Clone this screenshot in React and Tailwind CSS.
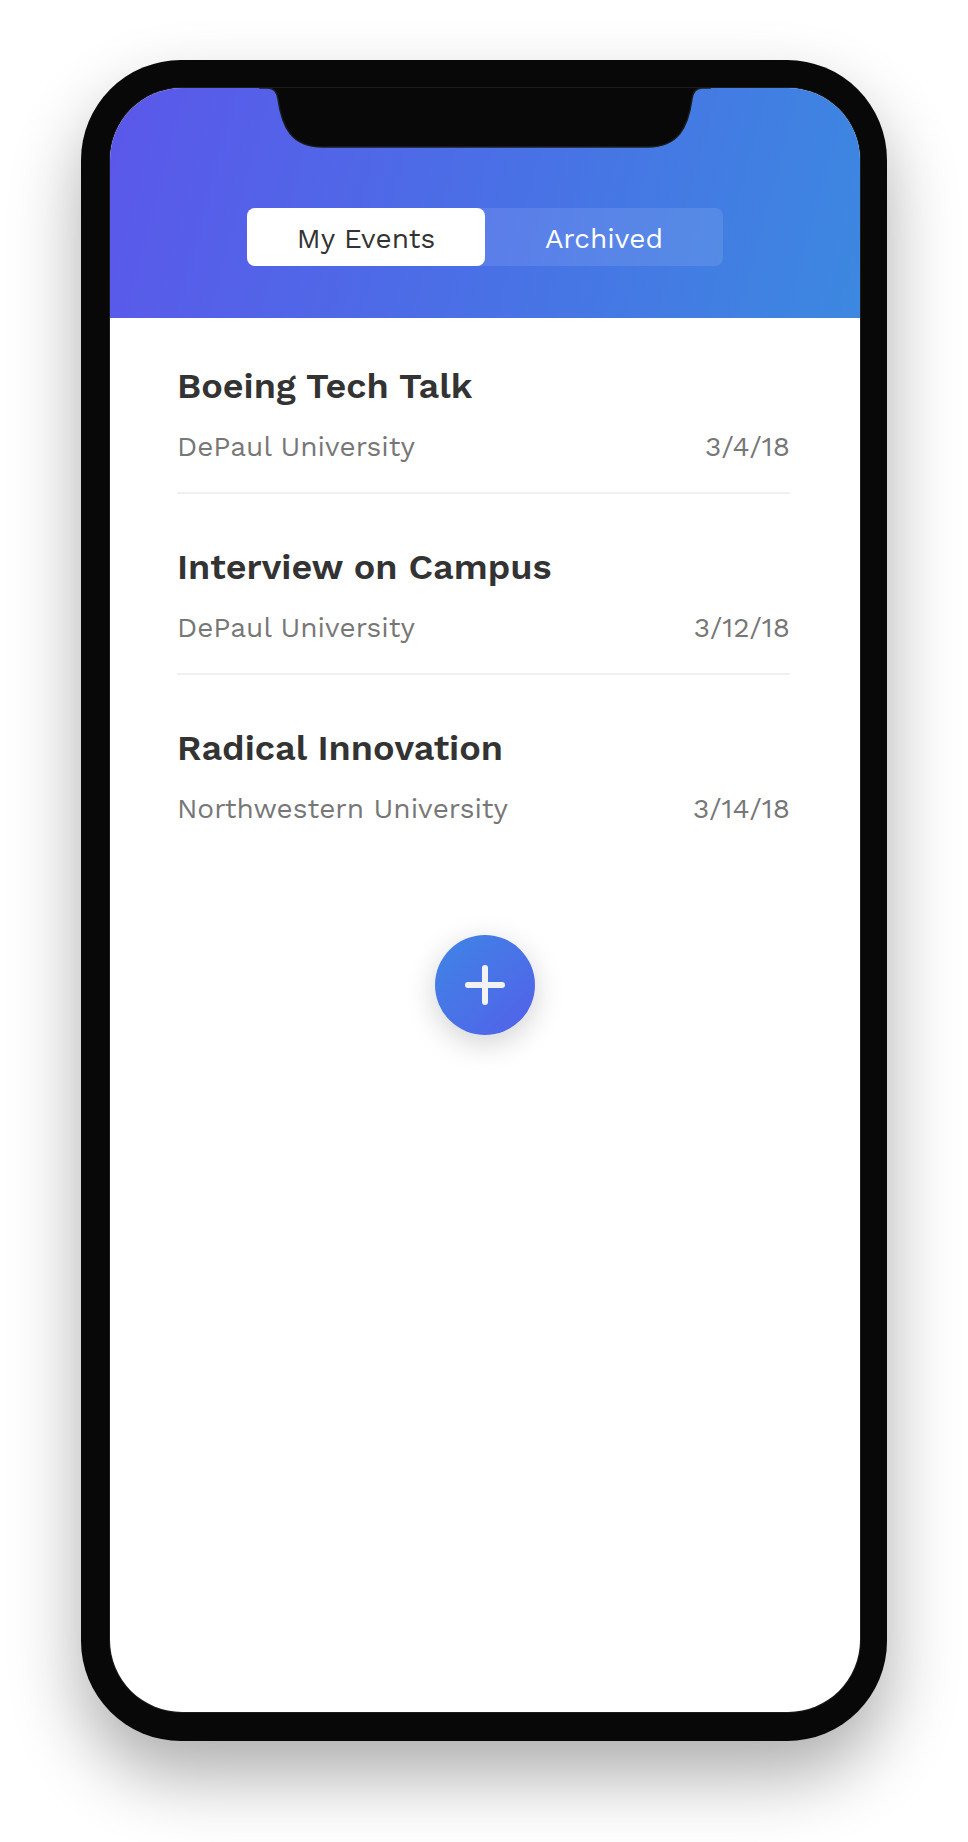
import React from "react";

const events = [
  { title: "Boeing Tech Talk", place: "DePaul University", date: "3/4/18" },
  { title: "Interview on Campus", place: "DePaul University", date: "3/12/18" },
  { title: "Radical Innovation", place: "Northwestern University", date: "3/14/18" },
];

const Notch = () => (
  <svg className="absolute left-0 top-0" width="750" height="62" viewBox="0 0 750 62">
    <path
      d="M150 0 H158 C164 0 167 4 168 11 C172 40 182 59 212 59 H538 C568 59 578 40 582 11 C583 4 586 0 592 0 H600 V-2 H150 Z"
      fill="#080808"
      stroke="#1d1d1d"
      strokeWidth="1.5"
    />
  </svg>
);

const PlusIcon = () => (
  <svg width="40" height="40" viewBox="0 0 40 40">
    <path d="M20 3 V37 M3 20 H37" stroke="#f2f2f2" strokeWidth="6" strokeLinecap="round" />
  </svg>
);

const EventRow = ({ event, index, last }) => (
  <div className={`${index === 0 ? "pt-0" : "pt-[52px]"} ${last ? "" : "border-b-2 border-[#f0f0f0] pb-[28px]"}`}>
    <h2 className="text-[36px] leading-[42px] font-semibold text-[#333333]">{event.title}</h2>
    <div className="mt-[23px] flex items-center justify-between text-[28px] leading-[34px] text-[#777777]">
      <span>{event.place}</span>
      <span>{event.date}</span>
    </div>
  </div>
);

export default function App() {
  return (
    <div
      className="flex min-h-[1842px] w-full justify-center bg-white pt-[60px]"
      style={{ fontFamily: "'Work Sans', Inter, 'Noto Sans', sans-serif" }}
    >
      <div className="h-[1681px] w-[806px] rounded-[100px] bg-[#080808] pl-[29px] pr-[27px] pt-[28px] pb-[29px] shadow-[0_35px_70px_rgba(0,0,0,0.32)]">
        <div className="relative flex h-full w-full flex-col overflow-hidden rounded-[72px] bg-white ring-1 ring-[#1d1d1d]">
          {/* header */}
          <div className="relative flex h-[230px] shrink-0 justify-center bg-[linear-gradient(105deg,#5b57ea_0%,#4a6fe6_50%,#3c88e0_100%)] pt-[120px]">
            <Notch />
            <div className="flex h-[58px] w-[476px] rounded-lg bg-white/10 text-[28px]">
              <button className="flex flex-1 items-center justify-center rounded-lg bg-white pt-[3px] text-[#333333]">
                My Events
              </button>
              <button className="flex flex-1 items-center justify-center pt-[3px] text-white">Archived</button>
            </div>
          </div>

          {/* list */}
          <div className="pl-[67px] pr-[70px] pt-[47px]">
            {events.map((ev, i) => (
              <EventRow key={ev.title} event={ev} index={i} last={i === events.length - 1} />
            ))}
          </div>

          <div className="mt-[109px] flex justify-center">
            <button className="flex h-[100px] w-[100px] items-center justify-center rounded-full bg-[linear-gradient(135deg,#3f85e5,#5360e9)] shadow-[0_8px_30px_rgba(0,0,0,0.18)]">
              <PlusIcon />
            </button>
          </div>
        </div>
      </div>
    </div>
  );
}
